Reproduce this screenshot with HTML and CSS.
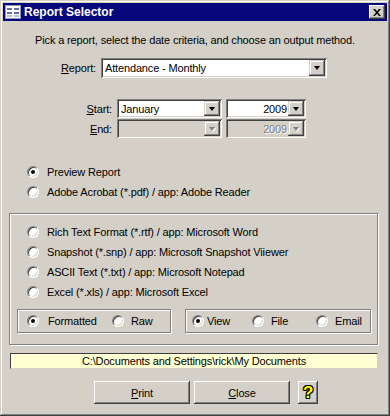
FILE: index.html
```html
<!DOCTYPE html>
<html lang="en">
<head>
<meta charset="UTF-8">
<title>Report Selector</title>
<link rel="stylesheet" href="styles.css">
</head>
<body>
  <div class="window">
    <div class="titlebar">
      <svg class="app-icon" width="16" height="16" viewBox="0 0 16 16">
        <rect x="0.5" y="1.5" width="15" height="13" fill="#fff" stroke="#9098b8"/>
        <rect x="2" y="4" width="5" height="2" fill="#6470a0"/>
        <rect x="9" y="4" width="5" height="2" fill="#6470a0"/>
        <rect x="2" y="8" width="5" height="2" fill="#6470a0"/>
        <rect x="9" y="8" width="5" height="2" fill="#6470a0"/>
        <rect x="2" y="11" width="5" height="2" fill="#b8c0d8"/>
        <rect x="9" y="11" width="5" height="2" fill="#b8c0d8"/>
      </svg>
      <span class="title">Report Selector</span>
      <div class="close-btn">
        <svg width="8" height="7" viewBox="0 0 8 7"><path d="M0 0h2l2 2.3 2-2.3h2l-3 3.5 3 3.5h-2l-2-2.3-2 2.3h-2l3-3.5z" fill="#000"/></svg>
      </div>
    </div>

    <div class="client">
      <p class="intro">Pick a report, select the date criteria, and choose an output method.</p>

      <div class="report-row">
        <span class="label"><u>R</u>eport:</span>
        <div class="combo combo-report">
          <span class="combo-text">Attendance - Monthly</span>
          <span class="drop"></span>
        </div>
      </div>

      <div class="date-row first">
        <span class="label"><u>S</u>tart:</span>
        <div class="combo combo-month">
          <span class="combo-text">January</span>
          <span class="drop"></span>
        </div>
        <div class="combo combo-year">
          <span class="combo-text">2009</span>
          <span class="drop"></span>
        </div>
      </div>
      <div class="date-row">
        <span class="label"><u>E</u>nd:</span>
        <div class="combo combo-month disabled">
          <span class="combo-text"></span>
          <span class="drop"></span>
        </div>
        <div class="combo combo-year disabled">
          <span class="combo-text">2009</span>
          <span class="drop"></span>
        </div>
      </div>

      <div class="options-top">
        <div class="option"><span class="radio checked"></span>Preview Report</div>
        <div class="option"><span class="radio"></span>Adobe Acrobat (*.pdf) / app: Adobe Reader</div>
      </div>

      <div class="group">
        <div class="option"><span class="radio"></span>Rich Text Format (*.rtf) / app: Microsoft Word</div>
        <div class="option"><span class="radio"></span>Snapshot (*.snp) / app: Microsoft Snapshot Viiewer</div>
        <div class="option"><span class="radio"></span>ASCII Text (*.txt) / app: Microsoft Notepad</div>
        <div class="option"><span class="radio"></span>Excel (*.xls) / app: Microsoft Excel</div>
        <div class="subgroups">
          <div class="subbox subbox-format">
            <div class="choice choice-formatted"><span class="radio checked"></span>Formatted</div>
            <div class="choice"><span class="radio"></span>Raw</div>
          </div>
          <div class="subbox subbox-dest">
            <div class="choice choice-view"><span class="radio checked"></span>View</div>
            <div class="choice choice-file"><span class="radio"></span>File</div>
            <div class="choice"><span class="radio"></span>Email</div>
          </div>
        </div>
      </div>

      <div class="path">C:\Documents and Settings\rick\My Documents</div>

      <div class="buttons">
        <div class="btn btn-wide"><u>P</u>rint</div>
        <div class="btn btn-wide"><u>C</u>lose</div>
        <div class="btn btn-help"><span class="help-mark">?</span></div>
      </div>
    </div>
  </div>
</body>
</html>
```

FILE: styles.css
```css
body {
  margin: 0;
  background: #d4d0c8;
  font-family: "Liberation Sans", Arial, sans-serif;
  font-size: 11px;
  letter-spacing: -0.15px;
  color: #000;
}
.window {
  width: 390px;
  height: 416px;
  box-sizing: border-box;
  padding: 3px;
  background: #d4d0c8;
  box-shadow: inset -1px -1px #404040, inset 1px 1px #d4d0c8,
              inset -2px -2px #808080, inset 2px 2px #fff;
}

/* title bar */
.titlebar {
  height: 18px;
  background: #08087c;
  display: flex;
  align-items: center;
  padding: 0 2px;
  color: #fff;
}
.app-icon {
  display: block;
}
.title {
  margin-left: 3px;
  font-weight: bold;
  font-size: 12px;
  letter-spacing: 0;
}
.close-btn {
  margin-left: auto;
  width: 16px;
  height: 14px;
  display: flex;
  align-items: center;
  justify-content: center;
  background: #d4d0c8;
  box-shadow: inset -1px -1px #404040, inset 1px 1px #fff, inset -2px -2px #808080;
}

.client {
  padding: 0 6px;
}
.intro {
  margin: 13px 0 0;
  line-height: 13px;
  text-align: center;
}

/* combo boxes */
.report-row,
.date-row {
  display: flex;
  align-items: center;
}
.report-row {
  margin-top: 11px;
  height: 20px;
}
.date-row {
  height: 19px;
  margin-top: 1px;
}
.date-row.first {
  margin-top: 21px;
}
.label {
  text-align: right;
  margin-right: 5px;
}
.report-row .label {
  width: 87px;
}
.date-row .label {
  width: 103px;
}
.combo {
  height: 100%;
  box-sizing: border-box;
  padding: 2px;
  display: flex;
  background: #fff;
  box-shadow: inset 1px 1px #808080, inset -1px -1px #fff,
              inset 2px 2px #404040, inset -2px -2px #d4d0c8;
}
.combo-report {
  width: 226px;
}
.combo-month {
  width: 105px;
  margin-right: 4px;
}
.combo-year {
  width: 80px;
}
.combo-text {
  flex: 1;
  display: flex;
  align-items: center;
  padding-left: 2px;
}
.combo-year .combo-text {
  justify-content: flex-end;
  padding-right: 1px;
}
.drop {
  width: 16px;
  display: flex;
  align-items: center;
  justify-content: center;
  background: #d4d0c8;
  box-shadow: inset -1px -1px #404040, inset 1px 1px #d4d0c8,
              inset -2px -2px #808080, inset 2px 2px #fff;
}
.drop::after {
  content: "";
  width: 0;
  height: 0;
  border-style: solid;
  border-width: 4px 3.5px 0;
  border-color: #000 transparent transparent;
}
.combo.disabled {
  background: #d4d0c8;
}
.combo.disabled .combo-text {
  color: #808080;
  text-shadow: 1px 1px #fff;
}
.combo.disabled .drop::after {
  border-top-color: #808080;
  filter: drop-shadow(1px 1px 0 #fff);
}

/* radio options */
.options-top {
  margin-top: 24px;
}
.option {
  display: flex;
  align-items: center;
  height: 20px;
  padding-left: 18px;
}
.radio {
  width: 12px;
  height: 12px;
  box-sizing: border-box;
  border-radius: 50%;
  background: #fff;
  border: 1px solid;
  border-color: #808080 #fff #fff #808080;
  box-shadow: inset 1px 1px #404040, inset -1px -1px #d4d0c8;
  margin-right: 8px;
  display: flex;
  align-items: center;
  justify-content: center;
  flex: none;
}
.radio.checked::after {
  content: "";
  width: 4px;
  height: 4px;
  border-radius: 50%;
  background: #000;
}

/* group boxes */
.group {
  margin-top: 11px;
  width: 369px;
  height: 132px;
  box-sizing: border-box;
  padding: 8px 0 0 7px;
  border: 1px solid #808080;
  box-shadow: inset 1px 1px #fff, 1px 1px #fff;
}
.group .option {
  padding-left: 10px;
}
.subgroups {
  display: flex;
  gap: 14px;
  margin-top: 7px;
}
.subbox {
  height: 24px;
  box-sizing: border-box;
  display: flex;
  align-items: center;
  border: 1px solid #808080;
  box-shadow: inset 1px 1px #fff, 1px 1px #fff;
}
.subbox-format {
  width: 154px;
  padding-left: 9px;
}
.subbox-dest {
  width: 186px;
  padding-left: 6px;
}
.choice {
  display: flex;
  align-items: center;
}
.choice .radio {
  margin-right: 7px;
}
.choice-formatted {
  width: 85px;
}
.choice-formatted .radio {
  margin-right: 9px;
}
.choice-view {
  width: 60px;
}
.choice-view .radio {
  margin-right: 3px;
}
.choice-file {
  width: 64px;
}

/* path */
.path {
  margin: 8px 0 0 1px;
  width: 368px;
  height: 16px;
  box-sizing: border-box;
  background: #ffffd4;
  border: 1px solid;
  border-color: #404040 #d4d0c8 #d4d0c8 #404040;
  text-align: center;
  line-height: 14px;
}

/* buttons */
.buttons {
  display: flex;
  margin-top: 12px;
  padding-left: 85px;
}
.btn {
  height: 23px;
  box-sizing: border-box;
  display: flex;
  align-items: center;
  justify-content: center;
  background: #d4d0c8;
  box-shadow: inset -1px -1px #404040, inset 1px 1px #fff,
              inset -2px -2px #808080, inset 2px 2px #d4d0c8;
}
.btn-wide {
  width: 96px;
  margin-right: 4px;
}
.btn-wide + .btn-wide {
  margin-right: 8px;
}
.btn-help {
  width: 20px;
}
.help-mark {
  font-weight: bold;
  font-size: 17px;
  line-height: 17px;
  color: #ffff00;
  text-shadow: 1px 0 #000, -1px 0 #000, 0 1px #000, 0 -1px #000,
               1px 1px #000, -1px -1px #000, 1px -1px #000, -1px 1px #000;
}
```
